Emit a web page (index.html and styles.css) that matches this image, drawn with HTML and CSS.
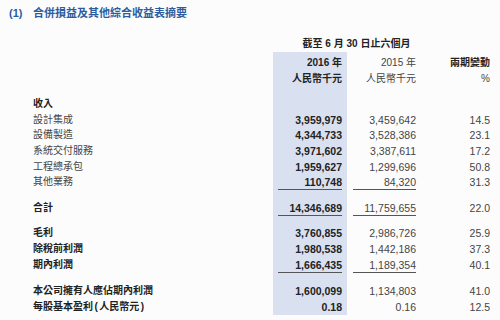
FILE: index.html
```html
<!DOCTYPE html>
<html lang="zh-Hant">
<head>
  <meta charset="UTF-8">
  <title>合併損益及其他綜合收益表摘要</title>
  <link rel="stylesheet" href="styles.css">
</head>
<body>
  <h2 class="title"><span class="num">(1)</span>合併損益及其他綜合收益表摘要</h2>

  <table class="summary">
    <colgroup>
      <col class="c-label">
      <col class="c-cur">
      <col class="c-prev">
      <col class="c-chg">
    </colgroup>
    <tr class="head">
      <td></td>
      <td colspan="2" class="period">截至 6 月 30 日止六個月</td>
      <td></td>
    </tr>
    <tr class="gap g3"><td></td><td class="cur"></td><td></td><td></td></tr>
    <tr class="head">
      <td></td>
      <td class="cur">2016 年</td>
      <td class="prev">2015 年</td>
      <td class="chg bold">兩期變動</td>
    </tr>
    <tr class="head">
      <td></td>
      <td class="cur">人民幣千元</td>
      <td class="prev">人民幣千元</td>
      <td class="chg">%</td>
    </tr>
    <tr class="gap g9"><td></td><td class="cur"></td><td></td><td></td></tr>

    <tr><td class="label bold">收入</td><td class="cur"></td><td></td><td></td></tr>
    <tr class="item"><td class="label">設計集成</td><td class="cur">3,959,979</td><td class="prev">3,459,642</td><td class="chg">14.5</td></tr>
    <tr class="item"><td class="label">設備製造</td><td class="cur">4,344,733</td><td class="prev">3,528,386</td><td class="chg">23.1</td></tr>
    <tr class="item"><td class="label">系統交付服務</td><td class="cur">3,971,602</td><td class="prev">3,387,611</td><td class="chg">17.2</td></tr>
    <tr class="item"><td class="label">工程總承包</td><td class="cur">1,959,627</td><td class="prev">1,299,696</td><td class="chg">50.8</td></tr>
    <tr class="item"><td class="label">其他業務</td><td class="cur"><span class="rule">110,748</span></td><td class="prev"><span class="rule">84,320</span></td><td class="chg">31.3</td></tr>
    <tr class="gap g10"><td></td><td class="cur"></td><td></td><td></td></tr>

    <tr><td class="label bold">合計</td><td class="cur"><span class="rule">14,346,689</span></td><td class="prev"><span class="rule">11,759,655</span></td><td class="chg">22.0</td></tr>
    <tr class="gap g9"><td></td><td class="cur"></td><td></td><td></td></tr>

    <tr><td class="label bold">毛利</td><td class="cur">3,760,855</td><td class="prev">2,986,726</td><td class="chg">25.9</td></tr>
    <tr><td class="label bold">除稅前利潤</td><td class="cur">1,980,538</td><td class="prev">1,442,186</td><td class="chg">37.3</td></tr>
    <tr><td class="label bold">期內利潤</td><td class="cur"><span class="rule">1,666,435</span></td><td class="prev"><span class="rule">1,189,354</span></td><td class="chg">40.1</td></tr>
    <tr class="gap g10"><td></td><td class="cur"></td><td></td><td></td></tr>

    <tr><td class="label bold">本公司擁有人應佔期內利潤</td><td class="cur">1,600,099</td><td class="prev">1,134,803</td><td class="chg">41.0</td></tr>
    <tr><td class="label bold">每股基本盈利<span class="paren">(</span>人民幣元<span class="paren">)</span></td><td class="cur">0.18</td><td class="prev">0.16</td><td class="chg">12.5</td></tr>
  </table>
</body>
</html>
```

FILE: styles.css
```css
body {
  margin: 0;
  background-color: #fcfcfd;
  color: #333;
  font-family: "Liberation Sans", "Noto Sans CJK TC", sans-serif;
}
.title {
  margin: 0;
  padding: 6px 0 0 9px;
  font-size: 11px;
  line-height: 14px;
  font-weight: bold;
  color: #2d5c9e;
}
.title .num {
  display: inline-block;
  width: 24px;
}
.summary {
  margin-top: 16px;
  width: 496px;
  table-layout: fixed;
  border-collapse: collapse;
  border-spacing: 0;
  font-size: 10.5px;
}
.c-label { width: 273px; }
.c-cur { width: 74px; }
.c-prev { width: 75px; }
.c-chg { width: 74px; }
.summary td {
  height: 16px;
  padding: 0;
  line-height: 14px;
  white-space: nowrap;
}
.summary tr.item td {
  height: 15.6px;
}
.summary .label {
  padding-left: 33px;
  font-size: 10px;
  color: #444;
}
.summary .label .paren {
  padding: 0 1.5px;
}
.summary .bold {
  font-weight: bold;
  color: #222;
}
.summary .cur {
  padding: 0 5px;
  text-align: right;
  font-weight: bold;
  color: #222;
  background-color: #d9e1f1;
}
.summary .prev {
  padding: 0 6px;
  text-align: right;
  color: #444;
}
.summary .chg {
  padding-right: 6px;
  text-align: right;
  color: #444;
}
.summary .head td {
  font-size: 10px;
}
.summary .period {
  padding-left: 18px;
  text-align: center;
  font-weight: bold;
  color: #222;
}
.summary .chg.bold {
  color: #222;
}
.rule {
  display: block;
  border-bottom: 1px solid #555;
  margin-bottom: -1px;
}
.summary tr.gap td { line-height: 0; }
.summary tr.g3 td { height: 3px; }
.summary tr.g9 td { height: 9px; }
.summary tr.g10 td { height: 10px; }
```
